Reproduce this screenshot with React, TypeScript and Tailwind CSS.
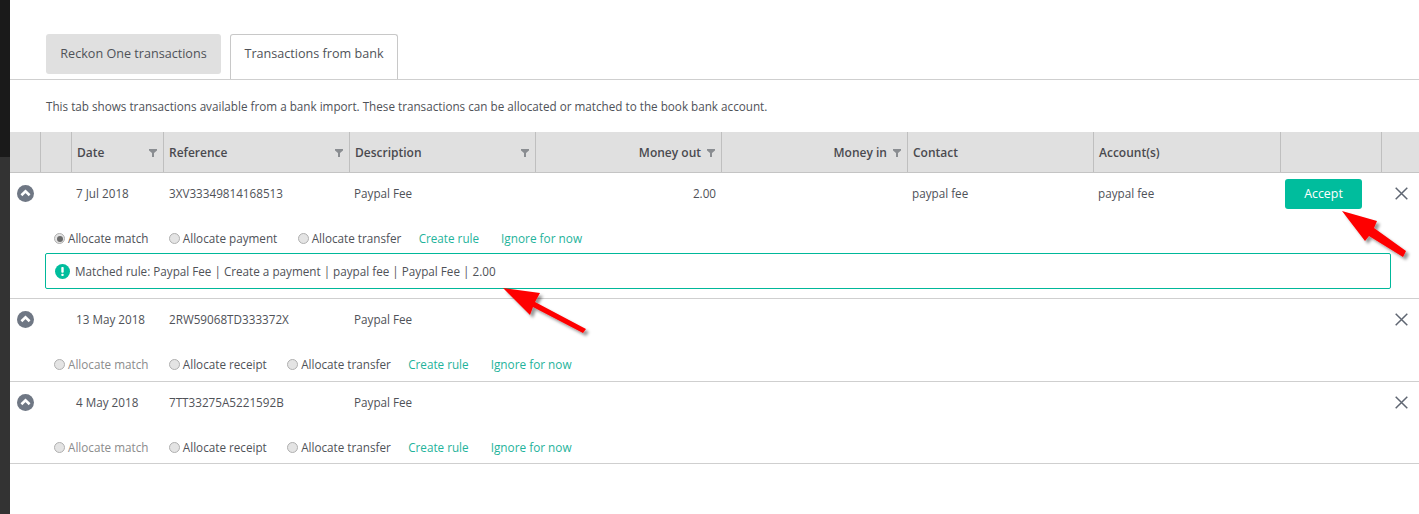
import React from "react";

const COLS = "grid-cols-[31px_31px_92px_186px_186px_186px_186px_186px_187px_101px_38px]";

function Funnel() {
  return (
    <svg width="8" height="8" viewBox="0 0 8 8" className="shrink-0">
      <path d="M0 0H8V1.6L5 4V8H3V4L0 1.6Z" fill="#8a8d91" />
    </svg>
  );
}

function HeadCell({ label, right, filter }: { label?: string; right?: boolean; filter?: "far" | "near" }) {
  return (
    <div className={`flex h-full items-center border-r border-[#bfbfbf] pl-[5px] pt-[1px] ${right ? "justify-end pr-[6px]" : ""} ${filter === "far" ? "justify-between pr-[6px]" : ""}`}>
      {label && <span className="font-semibold text-[12px] text-[#4a4a4f]">{label}</span>}
      {filter && <span className={right ? "ml-[6px]" : ""}><Funnel /></span>}
    </div>
  );
}

function Chevron() {
  return (
    <svg width="17" height="17" viewBox="0 0 17 17">
      <circle cx="8.5" cy="8.5" r="8.5" fill="#6f7784" />
      <path d="M4.4 10.3L8.5 6.4L12.6 10.3" fill="none" stroke="#fff" strokeWidth="2.6" />
    </svg>
  );
}

function Close() {
  return (
    <svg width="13" height="13" viewBox="0 0 13 13">
      <path d="M0.7 0.7L12.3 12.3M12.3 0.7L0.7 12.3" stroke="#5f6672" strokeWidth="1.5" />
    </svg>
  );
}

function Radio({ label, checked, dim }: { label: string; checked?: boolean; dim?: boolean }) {
  return (
    <span className="mr-[20.4px] flex items-center">
      <span className="mr-[3px] flex h-[11px] w-[11px] items-center justify-center rounded-full border border-[#b0b0b0] bg-[#e4e4e4]">
        {checked && <span className="h-[6px] w-[6px] rounded-full bg-[#6b6b6b]" />}
      </span>
      <span className={dim ? "text-[#8c8c8c]" : "text-[#4f5258]"}>{label}</span>
    </span>
  );
}

function Row({
  date, reference, out, contact, account, accept, second, firstDim, children, rowClass,
}: {
  date: string; reference: string; out?: string; contact?: string; account?: string; accept?: boolean;
  second: string; firstDim?: boolean; children?: React.ReactNode; rowClass: string;
}) {
  return (
    <div className={`border-b border-[#cfcfcf] ${rowClass}`}>
      <div className={`grid h-[41px] items-center ${COLS} text-[11.7px] text-[#4f5258]`}>
        <div className="col-span-2 flex pl-[7px]"><Chevron /></div>
        <div className="pl-[4px]">{date}</div>
        <div className="pl-[5px]">{reference}</div>
        <div className="pl-[4px]">Paypal Fee</div>
        <div className="pr-[6px] text-right">{out}</div>
        <div />
        <div className="pl-[4px]">{contact}</div>
        <div className="pl-[4px]">{account}</div>
        <div className="flex pl-[4px] pt-[1px]">
          {accept && (
            <button className="h-[30px] w-[77px] rounded-[3px] bg-[#00bd9d] text-[12.4px] text-white">Accept</button>
          )}
        </div>
        <div className="flex justify-center pl-[1px]"><Close /></div>
      </div>
      <div className="mt-[16px] flex h-[17px] items-center pl-[44px] text-[11.7px]">
        <Radio label="Allocate match" checked={!firstDim} dim={firstDim} />
        <Radio label={second} />
        <Radio label="Allocate transfer" />
        <span className="-ml-[3px] mr-[22px] text-[#1fb39b]">Create rule</span>
        <span className="text-[11.8px] text-[#1fb39b]">Ignore for now</span>
      </div>
      {children}
    </div>
  );
}

export default function App() {
  return (
    <div className="relative h-[514px] w-[1419px] overflow-hidden bg-white font-['Open_Sans',sans-serif]">
      <div className="flex h-full">
        <div className="flex w-[10px] shrink-0 flex-col">
          <div className="h-[157px] bg-[#1a1a1a]" />
          <div className="flex-1 bg-[#333333]" />
        </div>
        <div className="min-w-0 flex-1">
          <div className="flex h-[80px] items-start gap-[9px] border-b border-[#cfcfcf] pl-[36px] pt-[34px] text-[12.6px]">
            <div className="flex h-[40px] w-[175px] items-center justify-center rounded-[3px] bg-[#e0e0e0] text-[#4f5258]">
              Reckon One transactions
            </div>
            <div className="flex h-[45px] w-[168px] items-center justify-center rounded-t-[3px] border border-b-0 border-[#c8c8c8] bg-white pb-[5px] text-[#4f5258]">
              Transactions from bank
            </div>
          </div>
          <p className="flex h-[52px] items-center pl-[36px] pt-[1px] text-[11.7px] text-[#4f5258]">
            This tab shows transactions available from a bank import. These transactions can be allocated or matched to the book bank account.
          </p>
          <div className={`grid h-[41px] items-center ${COLS} border-b border-[#c4c4c4] bg-[#e0e0e0]`}>
            <HeadCell />
            <HeadCell />
            <HeadCell label="Date" filter="far" />
            <HeadCell label="Reference" filter="far" />
            <HeadCell label="Description" filter="far" />
            <HeadCell label="Money out" right filter="near" />
            <HeadCell label="Money in" right filter="near" />
            <HeadCell label="Contact" />
            <HeadCell label="Account(s)" />
            <HeadCell />
            <div />
          </div>
          <Row
            date="7 Jul 2018" reference="3XV33349814168513" out="2.00" contact="paypal fee" account="paypal fee" accept
            second="Allocate payment" rowClass="h-[126px]"
          >
            <div className="ml-[35px] mt-[6px] flex h-[36px] w-[1346px] items-center rounded-[2px] border border-[#00b89a] pl-[9px] pt-[1px] text-[11.7px] text-[#4f5258]">
              <svg width="15" height="15" viewBox="0 0 15 15" className="-mt-[1px] mr-[5px]">
                <circle cx="7.5" cy="7.5" r="7.5" fill="#00bd9d" />
                <rect x="6.3" y="3" width="2.4" height="5.8" rx="0.8" fill="#fff" />
                <rect x="6.3" y="9.8" width="2.4" height="2.3" rx="0.8" fill="#fff" />
              </svg>
              Matched rule: Paypal Fee | Create a payment | paypal fee | Paypal Fee | 2.00
            </div>
          </Row>
          <Row date="13 May 2018" reference="2RW59068TD333372X" firstDim second="Allocate receipt" rowClass="h-[83px]" />
          <Row date="4 May 2018" reference="7TT33275A5221592B" firstDim second="Allocate receipt" rowClass="h-[82px]" />
        </div>
      </div>
      <svg className="pointer-events-none absolute left-0 top-0" width="1419" height="514" viewBox="0 0 1419 514">
        <defs>
          <filter id="arrowShadow" x="-20%" y="-20%" width="150%" height="150%">
            <feDropShadow dx="3" dy="3" stdDeviation="1.5" floodColor="#000" floodOpacity="0.4" />
          </filter>
        </defs>
        <path d="M1342 211L1377 221L1374 228L1406 251L1403 257L1369 236L1365 241Z" fill="#fe0000" filter="url(#arrowShadow)" />
        <path d="M503 288L540 293L535 302L586 329L583 333L533 307L530 315Z" fill="#fe0000" filter="url(#arrowShadow)" />
      </svg>
    </div>
  );
}
